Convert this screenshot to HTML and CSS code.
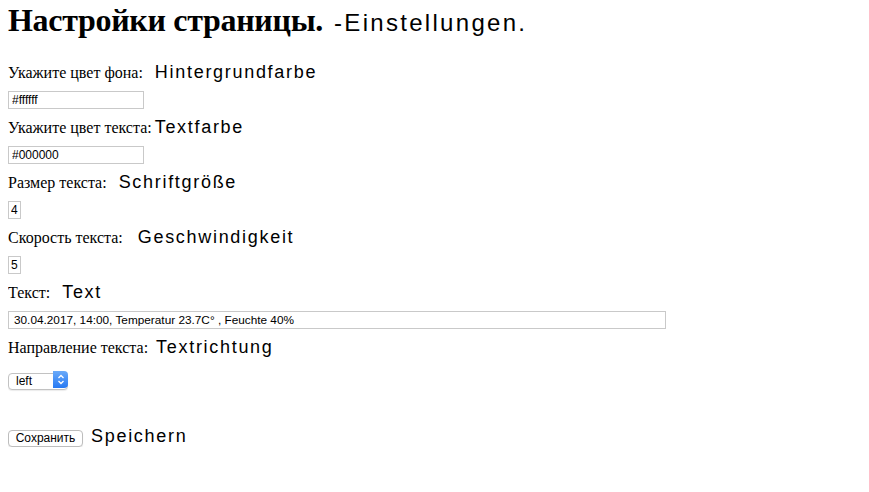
FILE: index.html
```html
<!DOCTYPE html>
<html lang="ru">
<head>
  <meta charset="UTF-8" />
  <title>Настройки страницы</title>
  <link rel="stylesheet" href="styles.css">
</head>
<body>
  <h1 class="title">Настройки страницы.<span class="de de-title">-Einstellungen.</span></h1>

  <form class="settings">
    <div class="field">
      <div class="field-label">Укажите цвет фона:<span class="de">Hintergrundfarbe</span></div>
      <input class="inp inp-color" type="text" id="bgColor" value="#ffffff" />
    </div>
    <div class="field">
      <div class="field-label">Укажите цвет текста:<span class="de de-tight">Textfarbe</span></div>
      <input class="inp inp-color" type="text" id="textColor" value="#000000" />
    </div>
    <div class="field">
      <div class="field-label">Размер текста:<span class="de">Schriftgröße</span></div>
      <input class="inp inp-small" type="text" id="textSize" value="4" />
    </div>
    <div class="field">
      <div class="field-label">Скорость текста:<span class="de de-wide">Geschwindigkeit</span></div>
      <input class="inp inp-small" type="text" id="textSpeed" value="5" />
    </div>
    <div class="field">
      <div class="field-label">Текст:<span class="de">Text</span></div>
      <input class="inp inp-long" type="text" id="text" value="30.04.2017, 14:00, Temperatur 23.7C° , Feuchte 40%" />
    </div>
    <div class="field field-select">
      <div class="field-label">Направление текста:<span class="de de-mid">Textrichtung</span></div>
      <div class="select-wrap">
        <select class="sel" id="direction">
          <option value="left">left</option>
          <option value="right">right</option>
        </select>
        <span class="sel-arrow">
          <svg width="8" height="11" viewBox="0 0 8 11">
            <path d="M1.5 4 L4 1.5 L6.5 4 M1.5 7 L4 9.5 L6.5 7" fill="none" stroke="#fff" stroke-width="1.3" />
          </svg>
        </span>
      </div>
    </div>

    <div class="actions">
      <button type="button" class="btn">Сохранить</button>
      <span class="de">Speichern</span>
    </div>
  </form>
</body>
</html>
```

FILE: styles.css
```css
body {
  margin: 0 8px;
  padding: 0;
  font-family: 'Liberation Serif', 'Times New Roman', serif;
  font-size: 16px;
  color: #000;
  background: #fff;
}
.title {
  margin: 0 0 17px;
  font-size: 32px;
  line-height: 40px;
  font-weight: bold;
  letter-spacing: -0.3px;
}
.de {
  font-family: 'Liberation Sans', Arial, sans-serif;
  font-weight: normal;
  font-size: 18px;
  letter-spacing: 1.7px;
  margin-left: 12px;
}
.de-title {
  font-size: 24px;
  letter-spacing: 2.3px;
  margin-left: 11px;
}
.de-tight {
  margin-left: 3px;
}
.de-wide {
  margin-left: 15px;
}
.de-mid {
  margin-left: 8px;
}
.field-label {
  height: 25px;
  line-height: 24px;
  white-space: nowrap;
}
.inp {
  display: block;
  box-sizing: border-box;
  height: 18px;
  margin: 6px 0 6px;
  padding: 1px 3px;
  border: 1px solid #c9c9c9;
  border-radius: 0;
  font-family: 'Liberation Sans', Arial, sans-serif;
  font-size: 12px;
  color: #000;
  background: #fff;
  outline: none;
}
.inp-color {
  width: 136px;
}
.inp-small {
  width: 13px;
  padding: 1px 2px;
}
.inp-long {
  width: 658px;
  padding: 1px 5px;
  font-size: 11.8px;
}
.field-select .field-label {
  margin-bottom: 11px;
}
.select-wrap {
  position: relative;
  display: inline-block;
  height: 17px;
  vertical-align: top;
}
.sel {
  appearance: none;
  -webkit-appearance: none;
  box-sizing: border-box;
  width: 60px;
  height: 17px;
  margin: 0;
  padding: 0 0 0 7px;
  border: 1px solid #c2c2c2;
  border-radius: 4px;
  background: #fff;
  font-family: 'Liberation Sans', Arial, sans-serif;
  font-size: 12px;
  line-height: 15px;
  color: #000;
  box-shadow: 0 1px 1px rgba(0,0,0,0.08);
}
.sel-arrow {
  position: absolute;
  top: 0;
  right: 0;
  width: 15px;
  height: 17px;
  border-radius: 0 4px 4px 0;
  background: linear-gradient(#6aaaf9, #2679f3);
  display: flex;
  align-items: center;
  justify-content: center;
  pointer-events: none;
}
.actions {
  display: flex;
  align-items: baseline;
  margin-top: 37px;
}
.btn {
  box-sizing: border-box;
  height: 17px;
  width: 75px;
  padding: 0;
  border: 1px solid #bdbdbd;
  border-radius: 4px;
  background: #fff;
  font-family: 'Liberation Sans', Arial, sans-serif;
  font-size: 12px;
  line-height: 15px;
  color: #000;
  box-shadow: 0 1px 1px rgba(0,0,0,0.08);
}
.actions .de {
  margin-left: 8px;
}
```
